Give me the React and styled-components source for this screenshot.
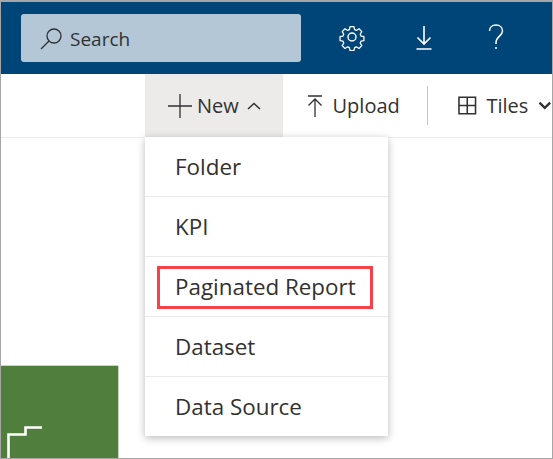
import React from "react";
import styled, { createGlobalStyle } from "styled-components";

const Global = createGlobalStyle`
  html, body { margin: 0; padding: 0; background: #fff; }
  body { font-family: "Open Sans", "Noto Sans", sans-serif; }
`;

const Frame = styled.div`
  position: relative;
  width: 553px;
  height: 459px;
  box-sizing: border-box;
  border: 1px solid #a6a6a6;
  border-top-width: 2px;
  overflow: hidden;
  display: flex;
  flex-direction: column;
  background: #fff;
`;

const Header = styled.header`
  height: 72px;
  flex: none;
  background: #004578;
  display: flex;
  align-items: center;
  padding: 0 0 4px 20px;
  box-sizing: border-box;
`;

const SearchBox = styled.div`
  width: 280px;
  height: 48px;
  background: #b3c7d7;
  border-radius: 3px;
  display: flex;
  align-items: center;
  gap: 6px;
  padding-left: 18px;
  box-sizing: border-box;
  color: #323130;
  font-size: 19px;
  margin-top: 4px;
`;

const SearchLabel = styled.span`
  position: relative;
  top: 1px;
`;

const HeaderIcons = styled.div`
  display: flex;
  align-items: center;
  color: #fff;
  margin-left: 37px;
  margin-top: 2px;
`;

const HeaderIcon = styled.span`
  display: flex;
  margin-left: ${(p) => p.$gap}px;
`;

const Toolbar = styled.div`
  height: 64px;
  flex: none;
  display: flex;
  align-items: stretch;
  padding-left: 144px;
  border-bottom: 1px solid #edebe9;
  box-sizing: border-box;
  color: #323130;
  font-size: 20px;
`;

const ToolButton = styled.div`
  display: flex;
  align-items: center;
  box-sizing: border-box;
  width: ${(p) => p.$width}px;
  padding-left: ${(p) => p.$pad}px;
  gap: ${(p) => p.$gap}px;
  background: ${(p) => (p.$active ? "#edebe9" : "transparent")};
  white-space: nowrap;
`;

const Divider = styled.div`
  width: 1px;
  height: 39px;
  align-self: center;
  background: #c8c6c4;
`;

const Content = styled.main`
  flex: 1;
  display: flex;
  align-items: flex-end;
`;

const Tile = styled.div`
  width: 118px;
  height: 93px;
  background: #507e3c;
  border-top-right-radius: 2px;
  border-top: 1px solid #c9d6c3;
  border-right: 1px solid #c9d6c3;
  box-sizing: border-box;
  display: flex;
  align-items: flex-end;
  padding-left: 6px;
`;

const Menu = styled.ul`
  position: absolute;
  left: 144px;
  top: 135px;
  width: 243px;
  height: 299px;
  margin: 0;
  padding: 0;
  list-style: none;
  background: #fff;
  box-shadow: 0 2px 8px rgba(0, 0, 0, 0.28);
`;

const MenuItem = styled.li`
  position: relative;
  height: ${(p) => (p.$last ? 59 : 60)}px;
  box-sizing: border-box;
  display: flex;
  align-items: center;
  padding: 0 0 0 30px;
  font-size: 22.4px;
  color: #323130;
  border-bottom: ${(p) => (p.$last ? "none" : "1px solid #ebeaea")};
  white-space: nowrap;
`;

const Highlight = styled.span`
  position: absolute;
  left: 12px;
  top: 9px;
  width: 216px;
  height: 43px;
  box-sizing: border-box;
  border: 3px solid #f6404a;
`;

const items = ["Folder", "KPI", "Paginated Report", "Dataset", "Data Source"];

export default function App() {
  return (
    <>
      <Global />
      <Frame>
        <Header>
          <SearchBox>
            <svg width="25" height="25" viewBox="0 0 25 25" fill="none" stroke="#323130" strokeWidth="1.3">
              <circle cx="15" cy="10" r="7" />
              <path d="M10 15 L2 23" />
            </svg>
            <SearchLabel>Search</SearchLabel>
          </SearchBox>
          <HeaderIcons>
            <HeaderIcon $gap={0}>
              <svg width="28" height="28" viewBox="0 0 28 28" fill="none" stroke="#fff" strokeWidth="1.4" strokeLinejoin="round">
                <circle cx="14" cy="14" r="4" />
                <path d="M11.8 2.5h4.4l.7 3.3 2 .9 2.9-1.8 3.1 3.1-1.8 2.9.9 2 3.3.7v4.4l-3.3.7-.9 2 1.8 2.9-3.1 3.1-2.9-1.8-2 .9-.7 3.3h-4.4l-.7-3.3-2-.9-2.9 1.8-3.1-3.1 1.8-2.9-.9-2-3.3-.7v-4.4l3.3-.7.9-2-1.8-2.9 3.1-3.1 2.9 1.8 2-.9z" transform="translate(1.4 1.4) scale(.9)" />
              </svg>
            </HeaderIcon>
            <HeaderIcon $gap={50}>
              <svg width="16" height="25" viewBox="0 0 16 25" fill="none" stroke="#fff" strokeWidth="1.6">
                <path d="M8 1 V19 M1.5 12.5 L8 19 L14.5 12.5 M0.5 24 H15.5" />
              </svg>
            </HeaderIcon>
            <HeaderIcon $gap={56}>
              <svg width="16" height="26" viewBox="0 0 16 26" fill="none" stroke="#fff" strokeWidth="1.5">
                <path d="M1.5 7 C1.5 3.5 4 1 8 1 C12 1 14.5 3.5 14.5 7 C14.5 12 8 12.5 8 18.5 V20" />
                <path d="M8 23 V25" />
              </svg>
            </HeaderIcon>
          </HeaderIcons>
        </Header>
        <Toolbar>
          <ToolButton $active $width={138} $pad={23} $gap={5}>
            <svg width="24" height="24" viewBox="0 0 24 24" fill="none" stroke="#323130" strokeWidth="1.3">
              <path d="M12 0 V24 M0 12 H24" />
            </svg>
            New
            <svg width="14" height="8" viewBox="0 0 14 8" fill="none" stroke="#323130" strokeWidth="1.5" style={{ marginLeft: 3 }}>
              <path d="M1 7 L7 1.5 L13 7" />
            </svg>
          </ToolButton>
          <ToolButton $width={145} $pad={24} $gap={10}>
            <svg width="16" height="22" viewBox="0 0 16 22" fill="none" stroke="#323130" strokeWidth="1.3">
              <path d="M1 1 H15 M8 22 V4 M1.5 10.5 L8 4 L14.5 10.5" />
            </svg>
            Upload
          </ToolButton>
          <Divider />
          <ToolButton $width={124} $pad={30} $gap={10}>
            <svg width="19" height="19" viewBox="0 0 19 19" fill="none" stroke="#323130" strokeWidth="1.6">
              <path d="M1 1 H18 V18 H1 Z M9.5 1 V18 M1 9.5 H18" />
            </svg>
            Tiles
            <svg width="14" height="9" viewBox="0 0 14 9" fill="none" stroke="#323130" strokeWidth="2.4">
              <path d="M1.5 1.5 L7 7 L12.5 1.5" />
            </svg>
          </ToolButton>
        </Toolbar>
        <Content>
          <Tile>
            <svg width="35" height="32" viewBox="0 0 35 32" fill="none" stroke="#fff" strokeWidth="2.6">
              <path d="M1.5 32 V8.5 H18.5 V1.5 H35" />
            </svg>
          </Tile>
        </Content>
        <Menu>
          {items.map((label, i) => (
            <MenuItem key={label} $last={i === items.length - 1}>
              {label}
              {label === "Paginated Report" && <Highlight />}
            </MenuItem>
          ))}
        </Menu>
      </Frame>
    </>
  );
}
